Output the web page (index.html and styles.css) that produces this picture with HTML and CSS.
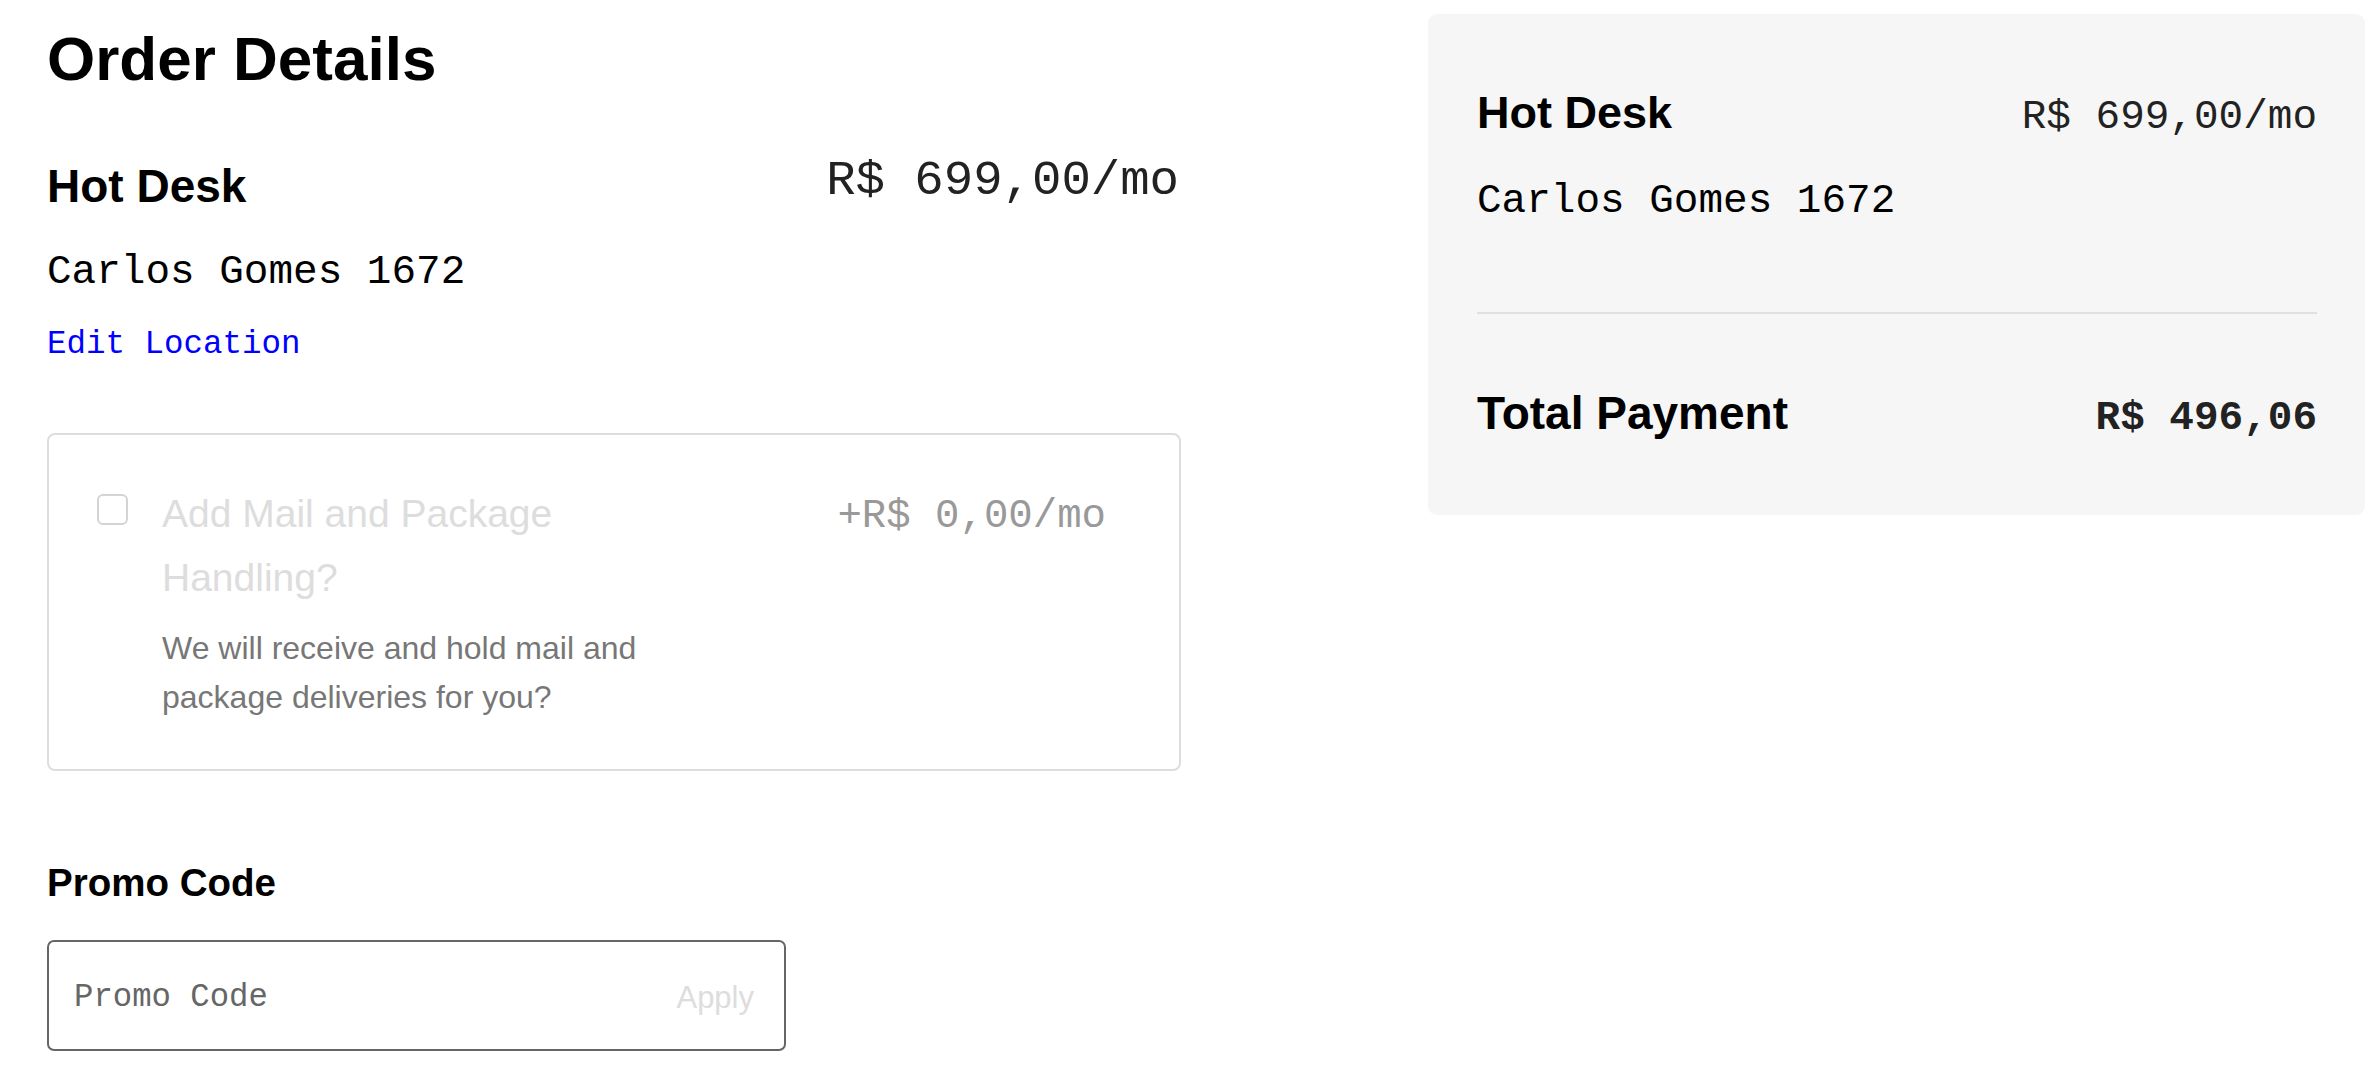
FILE: index.html
```html
<!DOCTYPE html>
<html lang="en">
<head>
<meta charset="utf-8">
<title>Order Details</title>
<link rel="stylesheet" href="styles.css">
</head>
<body>
<div class="page">
  <main class="details">
    <h1 class="title">Order Details</h1>

    <div class="product-row">
      <h2 class="product-name">Hot Desk</h2>
      <div class="product-price">R$ 699,00/mo</div>
    </div>
    <div class="address">Carlos Gomes 1672</div>
    <a class="edit-link" href="#">Edit Location</a>

    <div class="addon-card">
      <span class="checkbox"></span>
      <div class="addon-text">
        <div class="addon-title">Add Mail and Package Handling?</div>
        <div class="addon-desc">We will receive and hold mail and package deliveries for you?</div>
      </div>
      <div class="addon-price">+R$ 0,00/mo</div>
    </div>

    <h3 class="promo-label">Promo Code</h3>
    <div class="promo-input">
      <span class="promo-placeholder">Promo Code</span>
      <span class="promo-apply">Apply</span>
    </div>
  </main>

  <aside class="summary">
    <div class="summary-row">
      <div class="summary-name">Hot Desk</div>
      <div class="summary-price">R$ 699,00/mo</div>
    </div>
    <div class="summary-address">Carlos Gomes 1672</div>
    <hr class="divider">
    <div class="total-row">
      <div class="total-label">Total Payment</div>
      <div class="total-value">R$ 496,06</div>
    </div>
  </aside>
</div>
</body>
</html>
```

FILE: styles.css
```css
html, body {
  margin: 0;
  padding: 0;
  background: #ffffff;
}

body {
  font-family: "Liberation Sans", Arial, sans-serif;
  color: #000;
}

.page {
  display: flex;
  align-items: flex-start;
  gap: 247px;
  padding: 14px 0 0 47px;
}

.details {
  width: 1134px;
  flex: 0 0 1134px;
  display: flex;
  flex-direction: column;
  align-items: flex-start;
}

.title {
  margin: 8px 0 0;
  font-size: 62px;
  line-height: 74px;
  font-weight: 700;
}

.product-row {
  width: 100%;
  display: flex;
  justify-content: space-between;
  align-items: flex-start;
  margin-top: 57px;
}

.product-name {
  margin: 0;
  font-size: 46px;
  line-height: 66px;
  font-weight: 700;
}

.product-price {
  font-family: "Liberation Mono", monospace;
  font-size: 49px;
  line-height: 56px;
  color: #222;
  margin-right: 2px;
}

.address {
  margin-top: 28px;
  font-family: "Liberation Mono", monospace;
  font-size: 41px;
  line-height: 50px;
  color: #000;
}

.edit-link {
  margin-top: 28px;
  font-family: "Liberation Mono", monospace;
  font-size: 32.5px;
  line-height: 40px;
  color: #0000ff;
  text-decoration: none;
}

.addon-card {
  box-sizing: border-box;
  width: 100%;
  margin-top: 68px;
  border: 2px solid #dddddd;
  border-radius: 8px;
  padding: 47px 73px 47px 48px;
  display: flex;
  align-items: flex-start;
}

.checkbox {
  box-sizing: border-box;
  flex: 0 0 31px;
  width: 31px;
  height: 31px;
  margin-top: 12px;
  border: 2px solid #d4d4d4;
  border-radius: 6px;
  background: #fff;
}

.addon-text {
  flex: 0 0 540px;
  margin-left: 34px;
}

.addon-title {
  font-size: 39px;
  line-height: 64px;
  color: #dddddd;
}

.addon-desc {
  margin-top: 14px;
  font-size: 32px;
  line-height: 49px;
  color: #777;
}

.addon-price {
  margin-left: auto;
  margin-top: 2px;
  font-family: "Liberation Mono", monospace;
  font-size: 40.7px;
  line-height: 64px;
  color: #999;
}

.promo-label {
  margin: 89px 0 0;
  font-size: 38.5px;
  line-height: 46px;
  font-weight: 700;
}

.promo-input {
  box-sizing: border-box;
  width: 739px;
  height: 111px;
  margin-top: 34px;
  border: 2px solid #666;
  border-radius: 7px;
  padding: 4px 30px 0 25px;
  display: flex;
  align-items: center;
  justify-content: space-between;
}

.promo-placeholder {
  font-family: "Liberation Mono", monospace;
  font-size: 32.3px;
  line-height: 40px;
  color: #666;
}

.promo-apply {
  font-size: 31px;
  line-height: 40px;
  color: #dddddd;
}

.summary {
  box-sizing: border-box;
  flex: 0 0 937px;
  width: 937px;
  background: #f6f6f6;
  border-radius: 9px;
  padding: 71px 48px 69px 49px;
}

.summary-row,
.total-row {
  display: flex;
  justify-content: space-between;
  align-items: baseline;
}

.summary-name {
  font-size: 45px;
  line-height: 56px;
  font-weight: 700;
}

.summary-price {
  font-family: "Liberation Mono", monospace;
  font-size: 41px;
  line-height: 56px;
  color: #222;
}

.summary-address {
  margin-top: 31px;
  font-family: "Liberation Mono", monospace;
  font-size: 41px;
  line-height: 50px;
}

.divider {
  margin: 86px 0 0;
  border: 0;
  height: 2px;
  background: #e0e0e0;
}

.total-row {
  margin-top: 71px;
}

.total-label {
  font-size: 46px;
  line-height: 56px;
  font-weight: 700;
}

.total-value {
  font-family: "Liberation Mono", monospace;
  font-size: 41px;
  line-height: 56px;
  font-weight: 700;
  color: #222;
}
```
